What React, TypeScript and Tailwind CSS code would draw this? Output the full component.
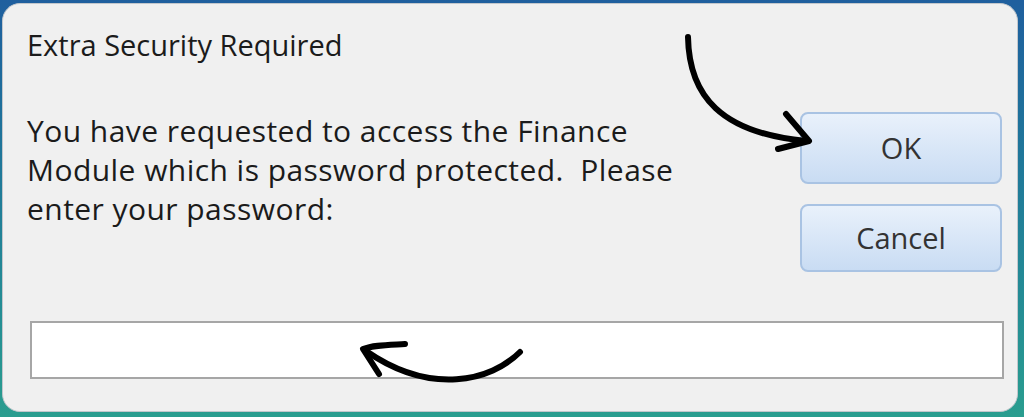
export default function App() {
  return (
    <div className="h-[417px] w-[1024px] overflow-hidden bg-linear-to-b from-[#1f5f9e] to-[#2a9d8f] pl-[2px] pt-[3px]">
      <div
        className="relative flex h-[409px] w-[1016px] flex-col rounded-[18px] border border-[#c3c7cc] bg-[#f0f0f0] text-[#1b1b1b]"
        style={{ fontFamily: '"Open Sans", "Noto Sans", sans-serif' }}
      >
        <div className="flex justify-between pr-[15px] pl-[24px]">
          <div className="pt-[22px]">
            <h1 className="text-[29px] leading-[38px]">Extra Security Required</h1>
            <p className="mt-[47px] w-[720px] text-[30px] leading-[39px] tracking-[0.45px]">
              You have requested to access the Finance
              <br />
              Module which is password protected.&nbsp; Please
              <br />
              enter your password:
            </p>
          </div>
          <div className="flex w-[202px] flex-col gap-[20px] pt-[108px]">
            <button className="h-[72px] rounded-[8px] border-2 border-[#a9c3e3] bg-linear-to-b from-[#e9f1fb] to-[#c9dcf3] text-[29px] text-[#333]">
              OK
            </button>
            <button className="h-[68px] rounded-[8px] border-2 border-[#a9c3e3] bg-linear-to-b from-[#e9f1fb] to-[#c9dcf3] text-[29px] text-[#333]">
              Cancel
            </button>
          </div>
        </div>
        <div className="mt-auto mb-[32px] ml-[27px] h-[58px] w-[974px] border-2 border-[#a6a6a6] bg-white" />

        <svg className="pointer-events-none absolute inset-0" width="1016" height="409" viewBox="2 3 1016 409">
          <g fill="none" stroke="#000" strokeLinecap="round" strokeLinejoin="round">
            <path d="M687 36 C688 95 720 132 805 140" strokeWidth="6" />
            <path d="M785 113 L808 140 L777 148" strokeWidth="6" />
            <path d="M519 351 C490 380 430 395 365 350" strokeWidth="6" />
            <path d="M404 343 C385 344 372 344 362 348 L378 373" strokeWidth="6" />
          </g>
        </svg>
      </div>
    </div>
  );
}
